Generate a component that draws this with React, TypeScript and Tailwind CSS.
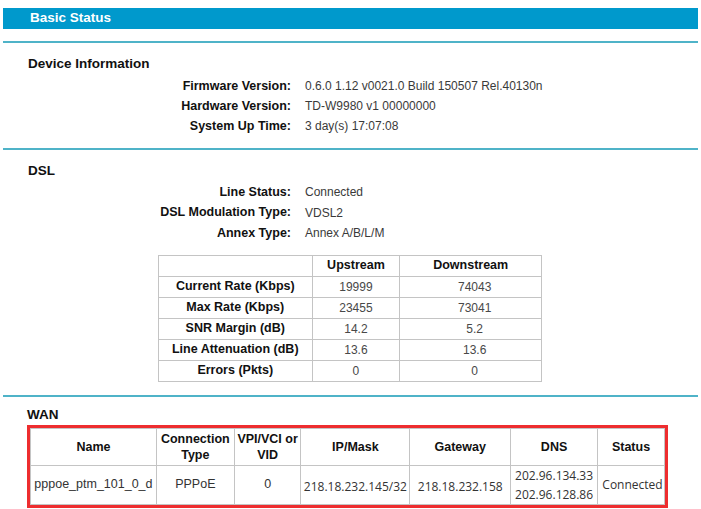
import React from "react";

type TRow = { label: string; value: string };

const deviceRows: TRow[] = [
  { label: "Firmware Version:", value: "0.6.0 1.12 v0021.0 Build 150507 Rel.40130n" },
  { label: "Hardware Version:", value: "TD-W9980 v1 00000000" },
  { label: "System Up Time:", value: "3 day(s) 17:07:08" },
];

const dslRows: TRow[] = [
  { label: "Line Status:", value: "Connected" },
  { label: "DSL Modulation Type:", value: "VDSL2" },
  { label: "Annex Type:", value: "Annex A/B/L/M" },
];

const rateRows = [
  ["Current Rate (Kbps)", "19999", "74043"],
  ["Max Rate (Kbps)", "23455", "73041"],
  ["SNR Margin (dB)", "14.2", "5.2"],
  ["Line Attenuation (dB)", "13.6", "13.6"],
  ["Errors (Pkts)", "0", "0"],
];

const Divider = ({ className }: { className: string }) => (
  <div className={`h-[2px] w-full bg-[#4fb3c8] ${className}`} />
);

const InfoRows = ({ rows, rowClass }: { rows: TRow[]; rowClass: string }) => (
  <div className="flex flex-col">
    {rows.map((row) => (
      <div key={row.label} className={`grid grid-cols-[263px_1fr] items-center gap-[14px] ${rowClass}`}>
        <span className="text-right text-[12.5px] font-bold text-[#111]">{row.label}</span>
        <span className="text-[12px] text-[#3a3a3a]">{row.value}</span>
      </div>
    ))}
  </div>
);

export default function App() {
  const cell = "border border-[#c4c4c4] p-0 text-center";
  return (
    <div className="min-h-[509px] w-[701px] bg-white px-[3px] pt-[8px] font-['Liberation_Sans',Arial,sans-serif]">
      <div className="flex h-[21px] items-center bg-[#0099cc] pl-[27px] text-[13.5px] font-bold text-white">
        Basic Status
      </div>
      <Divider className="mt-[12px]" />

      <div className="pl-[25px]">
        <h2 className="mt-[12px] flex h-[18px] items-center text-[13.5px] font-bold text-[#111]">Device Information</h2>
        <div className="mt-[3px]">
          <InfoRows rows={deviceRows} rowClass="h-[20px]" />
        </div>
      </div>
      <Divider className="mt-[12px]" />

      <div className="pl-[25px]">
        <h2 className="mt-[12px] flex h-[18px] items-center text-[13.5px] font-bold text-[#111]">DSL</h2>
        <div className="mt-[2px]">
          <InfoRows rows={dslRows} rowClass="h-[20.5px]" />
        </div>
        <table className="ml-[130px] mt-[11px] w-[384px] border-collapse text-[12px]">
          <colgroup>
            <col className="w-[154px]" />
            <col className="w-[88px]" />
            <col className="w-[142px]" />
          </colgroup>
          <thead>
            <tr className="h-[21px]">
              <th className={cell}></th>
              <th className={`${cell} text-[12.5px] font-bold text-[#111]`}>Upstream</th>
              <th className={`${cell} text-[12.5px] font-bold text-[#111]`}>Downstream</th>
            </tr>
          </thead>
          <tbody>
            {rateRows.map(([label, up, down]) => (
              <tr key={label} className="h-[21px]">
                <td className={`${cell} text-[12.5px] font-bold text-[#111]`}>{label}</td>
                <td className={`${cell} text-[#484848]`}>{up}</td>
                <td className={`${cell} pl-[8px] text-[#484848]`}>{down}</td>
              </tr>
            ))}
          </tbody>
        </table>
      </div>
      <Divider className="mt-[13px]" />

      <div className="pl-[24px]">
        <h2 className="mt-[10px] flex h-[18px] items-center text-[13.5px] font-bold text-[#111]">WAN</h2>
        <div className="w-[641px] border-[3px] border-[#ee2d2f]">
          <table className="w-[635px] border-collapse text-[12px]">
            <colgroup>
              <col className="w-[126px]" />
              <col className="w-[78px]" />
              <col className="w-[67px]" />
              <col className="w-[109px]" />
              <col className="w-[101px]" />
              <col className="w-[87px]" />
              <col className="w-[67px]" />
            </colgroup>
            <thead>
              <tr className="h-[37px] text-[12.5px] font-bold leading-[16px] text-[#111]">
                <th className={cell}>Name</th>
                <th className={cell}>
                  Connection
                  <br />
                  Type
                </th>
                <th className={cell}>
                  VPI/VCI or
                  <br />
                  VID
                </th>
                <th className={cell}>IP/Mask</th>
                <th className={cell}>Gateway</th>
                <th className={cell}>DNS</th>
                <th className={cell}>Status</th>
              </tr>
            </thead>
            <tbody>
              <tr className="h-[37px] text-[#333]">
                <td className={`${cell} text-[12.5px]`}>pppoe_ptm_101_0_d</td>
                <td className={`${cell} text-[12.5px]`}>PPPoE</td>
                <td className={`${cell} text-[12.5px]`}>0</td>
                <td className={`${cell} pt-[4px] font-['Open_Sans',sans-serif] text-[12px]`}>218.18.232.145/32</td>
                <td className={`${cell} pt-[4px] font-['Open_Sans',sans-serif] text-[12px]`}>218.18.232.158</td>
                <td className={`${cell} font-['Open_Sans',sans-serif] text-[12px] leading-[19px]`}>
                  202.96.134.33
                  <br />
                  202.96.128.86
                </td>
                <td className={`${cell} pl-[3px] font-['Open_Sans',sans-serif] text-[12px]`}>Connected</td>
              </tr>
            </tbody>
          </table>
        </div>
      </div>
    </div>
  );
}
